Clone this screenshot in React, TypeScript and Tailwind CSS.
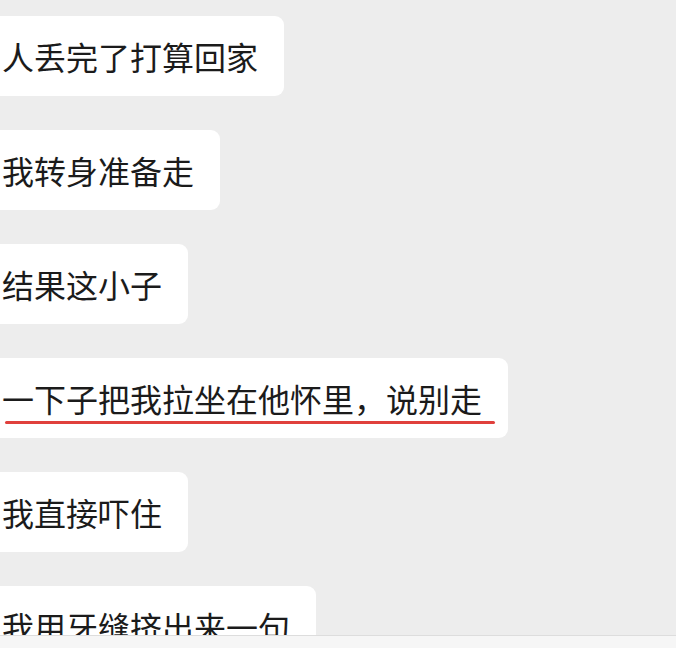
import React from "react";

const msgs = [
  "人丢完了打算回家",
  "我转身准备走",
  "结果这小子",
  "一下子把我拉坐在他怀里，说别走",
  "我直接吓住",
  "我用牙缝挤出来一句",
];

export default function App() {
  return (
    <div
      className="w-[676px] h-[648px] bg-[#ededed] flex flex-col overflow-hidden"
      style={{ fontFamily: '"Noto Sans CJK SC", "Noto Sans", sans-serif' }}
    >
      <div className="flex-1 overflow-hidden flex flex-col items-start gap-[34px] pt-[16px]">
        {msgs.map((m, i) => (
          <div
            key={i}
            className="relative shrink-0 h-[80px] bg-white rounded-r-[9px] flex items-center pl-[2px] pr-[26px] text-[32px] leading-none text-[#1b1b1b] tracking-[0px]"
          >
            <span className="whitespace-nowrap">{m}</span>
            {i === 3 && (
              <div className="absolute left-[5px] w-[490px] top-[63px] h-[3px] rounded-full bg-[#e0403c]" />
            )}
          </div>
        ))}
      </div>
      <div className="h-[13px] shrink-0 bg-[#f6f6f6] border-t border-[#dddddd]" />
    </div>
  );
}
